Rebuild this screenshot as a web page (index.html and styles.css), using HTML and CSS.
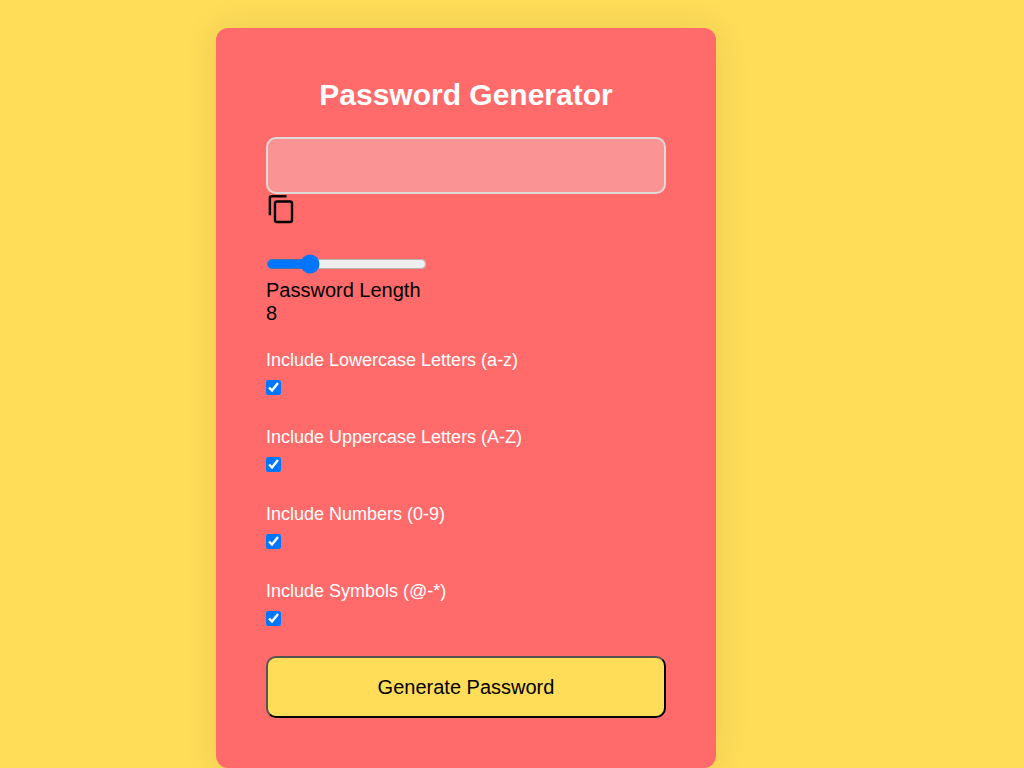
FILE: index.html
```html
<!DOCTYPE html>
<html lang="en">
<head>
<meta charset="utf-8">
<title>Password Generator</title>
<link rel="stylesheet" href="styles.css">
</head>
<body>
<main class="container">
  <h1 class="title">Password Generator</h1>
  <div class="display">
    <input class="password" type="text" aria-label="Password" readonly>
    <button class="copy" type="button" aria-label="Copy password">
      <svg class="copy-icon" viewBox="0 0 30 30" aria-hidden="true"><path d="M20.500 2.300H5.500Q3.900 2.300 3.900 3.900V21.300"/><rect x="9" y="7.500" width="17" height="20.500" rx="2"/></svg>
    </button>
  </div>
  <div class="length">
    <input class="slider" id="length" type="range" min="1" max="30" value="8">
    <label for="length">Password Length</label>
    <output for="length">8</output>
  </div>
  <div class="option"><label for="lower">Include Lowercase Letters (a-z)</label><input class="check" id="lower" type="checkbox" checked></div>
  <div class="option"><label for="upper">Include Uppercase Letters (A-Z)</label><input class="check" id="upper" type="checkbox" checked></div>
  <div class="option"><label for="numbers">Include Numbers (0-9)</label><input class="check" id="numbers" type="checkbox" checked></div>
  <div class="option"><label for="symbols">Include Symbols (@-*)</label><input class="check" id="symbols" type="checkbox" checked></div>
  <button class="generate" type="button">Generate Password</button>
</main>
</body>
</html>
```
FILE: styles.css
```css
* {
  box-sizing: border-box;
}

body {
  margin: 0;
  overflow: hidden;
  background: #ffdd59;
  font-family: "Liberation Sans", Arial, sans-serif;
  font-size: 20px;
  line-height: 23px;
}

.container {
  display: flex;
  flex-direction: column;
  width: 100%;
  max-width: 500px;
  margin: 28px 0 0 216px;
  padding: 50px;
  border-radius: 12px;
  background: #ff6b6b;
  box-shadow: 0 0 36px rgba(0, 0, 0, 0.09);
}

.title {
  margin: 0 0 25px;
  color: #fff;
  font-size: 30px;
  line-height: 34px;
  text-align: center;
}

.display {
  display: flex;
  flex-direction: column;
  margin-bottom: 30px;
}

.password {
  width: 100%;
  height: 57px;
  padding: 10px;
  border: 2px solid #dddada;
  border-radius: 10px;
  background: #fa9393;
  font-size: 20px;
}

.copy {
  width: 30px;
  height: 30px;
  padding: 0;
  border: 0;
  background: none;
}

.copy-icon {
  display: block;
  width: 30px;
  height: 30px;
  fill: none;
  stroke: #000;
  stroke-width: 2.4;
}

.length {
  display: flex;
  flex-direction: column;
  margin-bottom: 23px;
}

.slider {
  width: 129px;
  height: 16px;
  margin: 0 0 4px;
  accent-color: #0075ff;
  zoom: 1.25;
}

.option {
  display: flex;
  flex-direction: column;
  margin-bottom: 30px;
  color: #fff;
  font-size: 18px;
  line-height: 24px;
}

.check {
  width: 15px;
  height: 15px;
  margin: 8px 0 0;
  accent-color: #0075ff;
}

.generate {
  height: 62px;
  border: 2px outset #000;
  border-radius: 10px;
  background: #ffdd59;
  color: #000;
  font: inherit;
}
```
